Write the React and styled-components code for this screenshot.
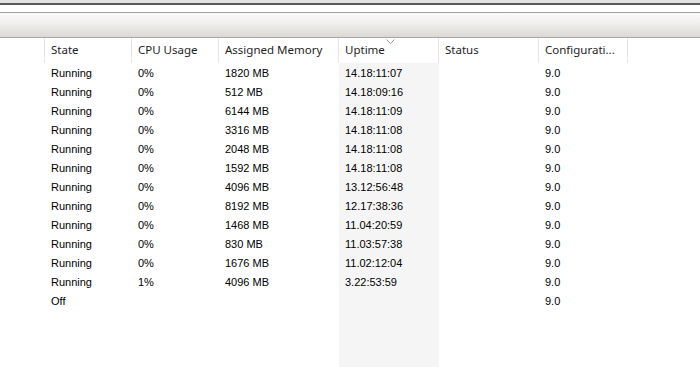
import React from "react";
import styled, { createGlobalStyle } from "styled-components";

const rows = [
  ["Running", "0%", "1820 MB", "14.18:11:07", "", "9.0"],
  ["Running", "0%", "512 MB", "14.18:09:16", "", "9.0"],
  ["Running", "0%", "6144 MB", "14.18:11:09", "", "9.0"],
  ["Running", "0%", "3316 MB", "14.18:11:08", "", "9.0"],
  ["Running", "0%", "2048 MB", "14.18:11:08", "", "9.0"],
  ["Running", "0%", "1592 MB", "14.18:11:08", "", "9.0"],
  ["Running", "0%", "4096 MB", "13.12:56:48", "", "9.0"],
  ["Running", "0%", "8192 MB", "12.17:38:36", "", "9.0"],
  ["Running", "0%", "1468 MB", "11.04:20:59", "", "9.0"],
  ["Running", "0%", "830 MB", "11.03:57:38", "", "9.0"],
  ["Running", "0%", "1676 MB", "11.02:12:04", "", "9.0"],
  ["Running", "1%", "4096 MB", "3.22:53:59", "", "9.0"],
  ["Off", "", "", "", "", "9.0"],
];

const headers = ["State", "CPU Usage", "Assigned Memory", "Uptime", "Status", "Configurati..."];

// first column is the blank icon column of the list view
const COLS = "45px 87px 87px 120px 100px 100px 89px 1fr";

const GlobalStyle = createGlobalStyle`
  html, body {
    margin: 0;
    padding: 0;
    background: #fff;
  }
  #root {
    height: 367px;
  }
`;

const Window = styled.div`
  width: 700px;
  height: 367px;
  display: flex;
  flex-direction: column;
  overflow: hidden;
  background: #fff;
`;

const TopStrip = styled.div`
  height: 3px;
  background: #e3e3e3;
  border-bottom: 2px solid #5a5a5a;
`;

const Gap = styled.div`
  height: 7px;
  background: #fff;
  border-bottom: 1px solid #a0a0a0;
`;

const Toolbar = styled.div`
  height: 24px;
  background: linear-gradient(#fafafa, #f1f0ee 40%, #dad8d3);
  border-bottom: 1px solid #a8a8a8;
`;

const HeaderRow = styled.div`
  display: grid;
  grid-template-columns: ${COLS};
  height: 25px;
`;

const HeaderCell = styled.div`
  position: relative;
  padding-left: 6px;
  font-family: "Noto Sans", "Open Sans", sans-serif;
  font-size: 11.5px;
  line-height: 24px;
  color: #1e1e1e;
  border-right: ${({ $last }) => ($last ? "none" : "1px solid #e5e5e5")};
  white-space: nowrap;
  overflow: hidden;
`;

const SortArrow = styled.svg`
  position: absolute;
  top: 1px;
  left: 47px;
`;

const Body = styled.div`
  flex: 1;
  display: flex;
  flex-direction: column;
`;

const Row = styled.div`
  display: grid;
  grid-template-columns: ${COLS};
  height: ${({ $fill }) => ($fill ? "auto" : "19px")};
  flex: ${({ $fill }) => ($fill ? 1 : "none")};
`;

const Cell = styled.div`
  padding: 1px 0 0 6px;
  font-family: "Liberation Sans", Arial, sans-serif;
  font-size: 11px;
  line-height: 18px;
  color: #000;
  white-space: nowrap;
  background: ${({ $sorted }) => ($sorted ? "#f5f5f5" : "transparent")};
`;

export default function App() {
  return (
    <Window>
      <GlobalStyle />
      <TopStrip />
      <Gap />
      <Toolbar />
      <HeaderRow>
        <HeaderCell />
        {headers.map((h, i) => (
          <HeaderCell key={h}>
            {h}
            {i === 3 && (
              <SortArrow width="9" height="6" viewBox="0 0 9 6">
                <path d="M0.5 0.5 L4.5 4.5 L8.5 0.5" fill="none" stroke="#9a9a9a" strokeWidth="1" />
              </SortArrow>
            )}
          </HeaderCell>
        ))}
        <HeaderCell $last />
      </HeaderRow>
      <Body>
        {rows.map((r, i) => (
          <Row key={i}>
            <Cell />
            {r.map((v, j) => (
              <Cell key={j} $sorted={j === 3}>
                {v}
              </Cell>
            ))}
            <Cell />
          </Row>
        ))}
        <Row $fill>
          <Cell />
          <Cell />
          <Cell />
          <Cell />
          <Cell $sorted />
          <Cell />
          <Cell />
          <Cell />
        </Row>
      </Body>
    </Window>
  );
}
